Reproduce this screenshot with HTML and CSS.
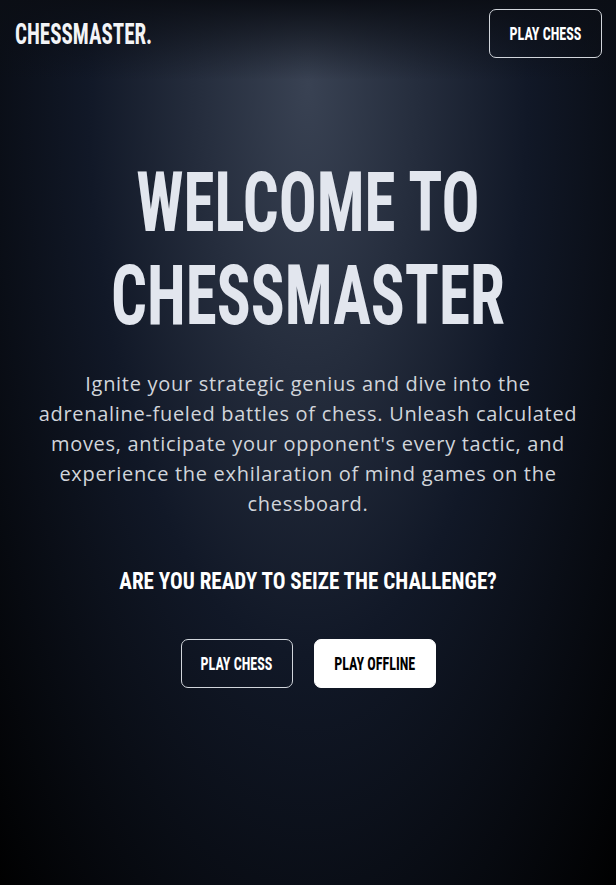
FILE: index.html
```html
<!DOCTYPE html>
<html lang="en">
<head>
<meta charset="utf-8">
<title>ChessMaster</title>
<link rel="stylesheet" href="styles.css">
</head>
<body>
<div class="page">
  <header class="nav">
    <a class="logo" href="#"><span class="cond">CHESSMASTER.</span></a>
    <a class="btn btn-outline btn-nav" href="#"><span class="cond">PLAY CHESS</span></a>
  </header>
  <main class="hero">
    <h1 class="title">WELCOME TO CHESSMASTER</h1>
    <p class="lead">Ignite your strategic genius and dive into the adrenaline-fueled battles of chess. Unleash calculated moves, anticipate your opponent's every tactic, and experience the exhilaration of mind games on the chessboard.</p>
    <h2 class="sub">ARE YOU READY TO SEIZE THE CHALLENGE?</h2>
    <div class="actions">
      <a class="btn btn-outline btn-a" href="#"><span class="cond">PLAY CHESS</span></a>
      <a class="btn btn-solid btn-b" href="#"><span class="cond">PLAY OFFLINE</span></a>
    </div>
  </main>
</div>
</body>
</html>
```
FILE: styles.css
```css
* { box-sizing: border-box; }
html, body { margin: 0; padding: 0; }
body {
  background: #000;
  font-family: "Open Sans", "Noto Sans", sans-serif;
}
.page {
  min-height: 885px;
  background:
    linear-gradient(to bottom, rgba(11, 14, 21, 0.96) 0px, rgba(11, 14, 21, 0.55) 35px, rgba(11, 14, 21, 0) 80px),
    radial-gradient(ellipse 440px 1140px at 50% 85px, #394253 0%, #111827 50%, #000 100%);
  display: flex;
  flex-direction: column;
}
.cond {
  display: inline-block;
  font-family: Roboto, "Open Sans", sans-serif;
  font-stretch: 75%;
  font-weight: 700;
}
.nav {
  display: flex;
  justify-content: space-between;
  align-items: center;
  padding: 9px 14px 0 15px;
}
.logo {
  color: #f3f4f6;
  text-decoration: none;
  font-size: 30px;
  line-height: 36px;
}
.logo .cond {
  transform: scaleX(0.7);
  transform-origin: left center;
}
.btn {
  display: flex;
  align-items: center;
  justify-content: center;
  height: 49px;
  border-radius: 7px;
  text-decoration: none;
  font-size: 19px;
  line-height: 24px;
}
.btn .cond { transform: scaleX(0.74); }
.btn-outline {
  border: 1px solid #d1d5db;
  color: #fff;
}
.btn-solid {
  background: #fff;
  color: #000;
  border: 1px solid #fff;
}
.btn-nav { width: 113px; }
.btn-a { width: 112px; }
.btn-b { width: 122px; }
.hero {
  display: flex;
  flex-direction: column;
  align-items: center;
  text-align: center;
}
.title {
  margin: 98px 0 0;
  width: 616px;
  font-family: Roboto, sans-serif;
  font-stretch: 75%;
  font-weight: 700;
  font-size: 83px;
  line-height: 93px;
  color: #e2e6ee;
  transform: scaleX(0.76);
}
.lead {
  margin: 27px 0 0;
  max-width: 548px;
  font-size: 20px;
  line-height: 30px;
  letter-spacing: 0.7px;
  color: #d1d5db;
}
.sub {
  margin: 46px 0 0;
  width: 616px;
  font-family: Roboto, sans-serif;
  font-stretch: 75%;
  font-weight: 700;
  font-size: 24px;
  line-height: 32px;
  color: #fff;
  transform: scaleX(0.88);
}
.actions {
  display: flex;
  gap: 21px;
  margin-top: 42px;
}
```
